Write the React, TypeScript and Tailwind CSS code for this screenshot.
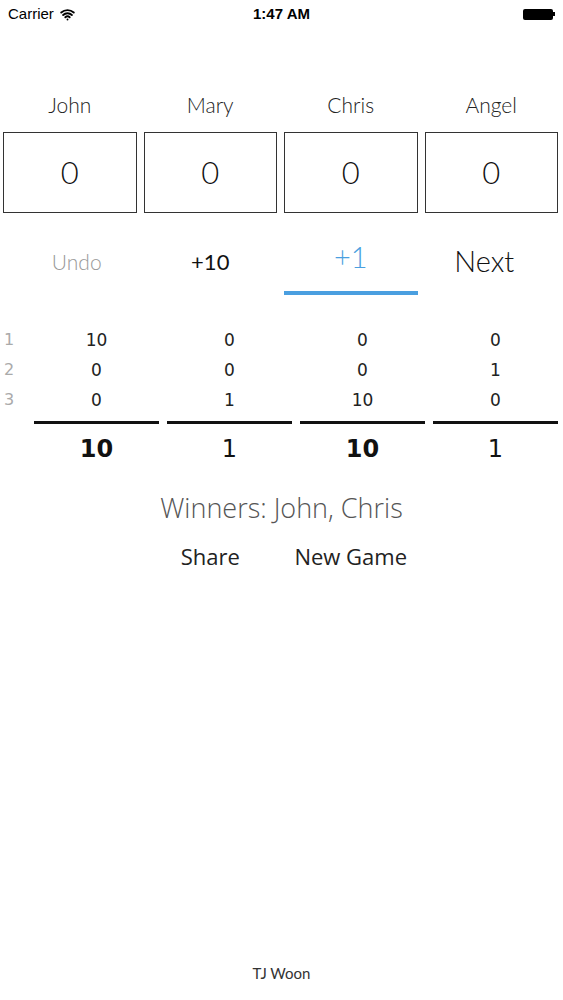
import { Wifi } from "lucide-react";

const players = ["John", "Mary", "Chris", "Angel"];
const rounds = [
  [10, 0, 0, 0],
  [0, 0, 0, 1],
  [0, 1, 10, 0],
];
const totals = [10, 1, 10, 1];

export default function App() {
  const best = Math.max(...totals);
  return (
    <div className="w-[563px] h-[1000px] bg-white flex flex-col text-[#222] font-['Lato',sans-serif]">
      {/* status bar */}
      <div className="h-[28px] px-[8px] flex items-center justify-between font-['Liberation_Sans',sans-serif] text-[15px] text-black">
        <div className="flex items-center gap-[6px] w-[120px]">
          <span>Carrier</span>
          <Wifi className="w-[15px] h-[15px]" strokeWidth={3} />
        </div>
        <span className="font-bold">1:47 AM</span>
        <div className="w-[120px] flex justify-end items-center">
          <div className="w-[30px] h-[11px] bg-black rounded-[2px]" />
          <div className="w-[2px] h-[4px] bg-black" />
        </div>
      </div>

      {/* names + scores */}
      <div className="mt-[63px] pl-[3px] pr-[5px] grid grid-cols-4 gap-x-[7px]">
        {players.map((p) => (
          <div key={p} className="text-center text-[21px] font-light text-[#222] h-[28px] leading-[28px]">
            {p}
          </div>
        ))}
        {players.map((p) => (
          <div
            key={p + "box"}
            className="mt-[13px] h-[81px] border-[1.5px] border-[#333] flex items-center justify-center text-[31px] font-light text-[#111]"
          >
            0
          </div>
        ))}
      </div>

      {/* action buttons */}
      <div className="mt-[20px] pl-[3px] pr-[5px] grid grid-cols-4 gap-x-[7px] h-[62px]">
        <div className="flex items-center justify-center pl-[14px] text-[21px] font-light text-[#999] pb-[4px]">Undo</div>
        <div className="flex items-center justify-center text-[22px] text-[#111] pb-[6px]">+10</div>
        <div className="flex flex-col items-center justify-end">
          <span className="text-[29px] font-light text-[#4a9fe0] leading-none mb-[20px]">+1</span>
          <div className="w-full h-[4px] bg-[#4a9fe0]" />
        </div>
        <div className="flex items-center justify-center pr-[14px] text-[29px] font-light text-[#111] pb-[6px]">Next</div>
      </div>

      {/* rounds table */}
      <div className="mt-[30px] flex font-['DejaVu_Sans',sans-serif]">
        <div className="w-[34px] pl-[4px] flex flex-col">
          {rounds.map((_, i) => (
            <div key={i} className="h-[30px] leading-[30px] text-[16px] text-[#aaa]">
              {i + 1}
            </div>
          ))}
        </div>
        <div className="flex-1 pr-[5px] grid grid-cols-4 gap-x-[8px]">
          {players.map((p, c) => (
            <div key={p} className="flex flex-col items-center">
              {rounds.map((r, i) => (
                <div key={i} className="h-[30px] leading-[30px] text-[17px] text-[#222]">
                  {r[c]}
                </div>
              ))}
              <div className="w-full h-[3px] bg-[#111] mt-[6px]" />
              <div
                className={
                  "mt-[8px] text-[24px] leading-[34px] text-[#111] " +
                  (totals[c] === best ? "font-bold" : "font-normal")
                }
              >
                {totals[c]}
              </div>
            </div>
          ))}
        </div>
      </div>

      {/* winners */}
      <div className="mt-[22px] text-center text-[27px] font-light text-[#555] font-['Open_Sans',sans-serif] leading-[40px]">
        Winners: John, Chris
      </div>
      <div className="mt-[12px] pl-[3px] pr-[5px] grid grid-cols-4 gap-x-[7px] text-[22px] text-[#222] font-['Open_Sans',sans-serif]">
        <span />
        <span className="text-center">Share</span>
        <span className="text-center">New Game</span>
        <span />
      </div>

      <div className="mt-auto mb-[16px] text-center text-[15px] text-[#333]">TJ Woon</div>
    </div>
  );
}
